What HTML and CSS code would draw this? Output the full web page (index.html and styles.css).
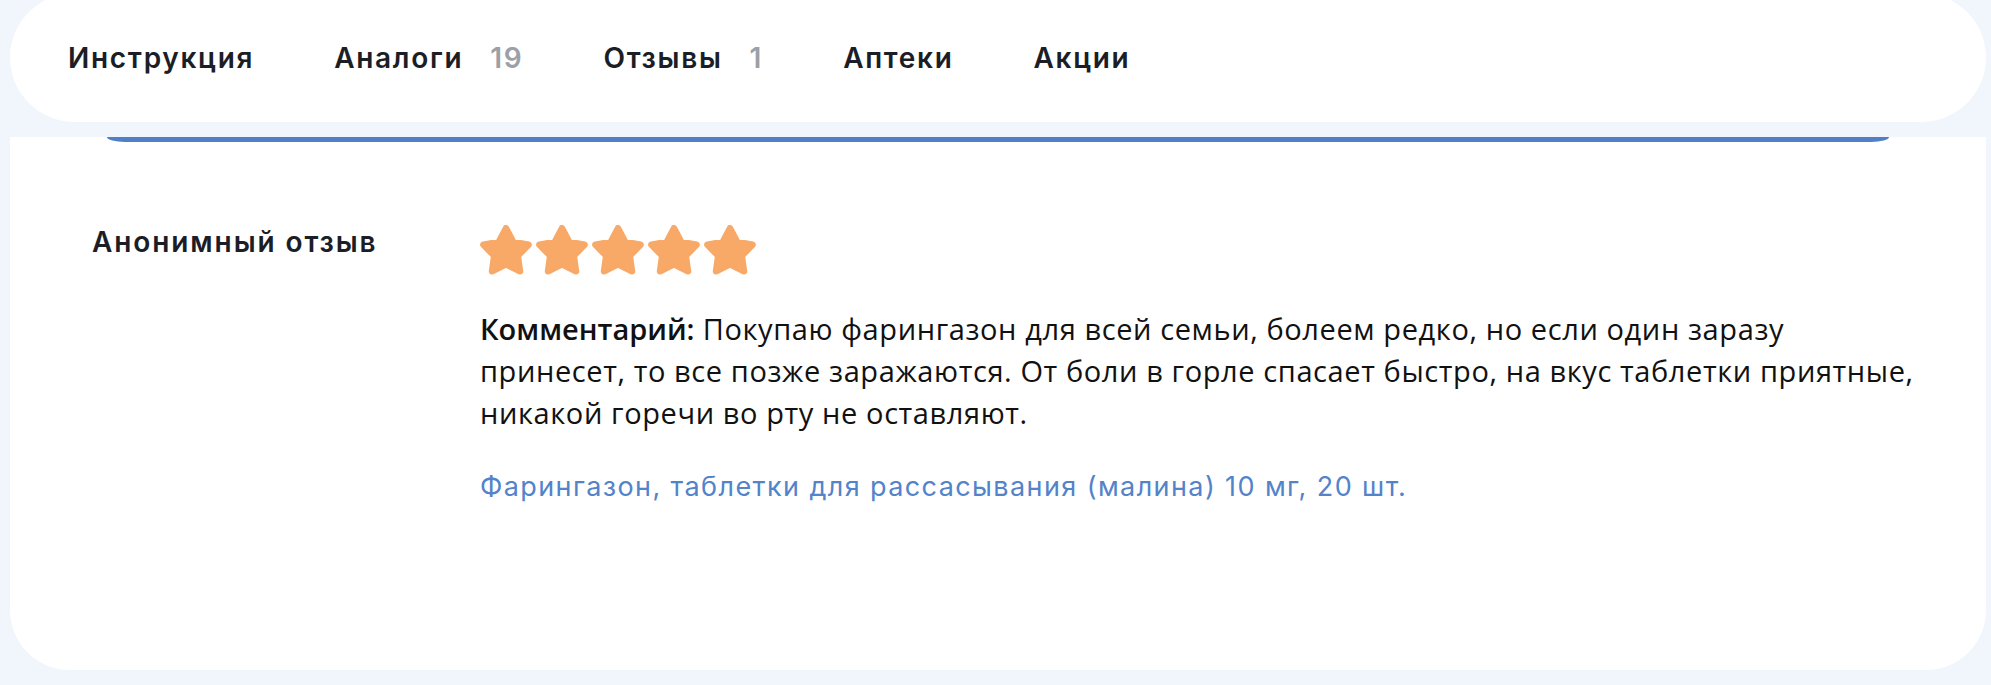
FILE: index.html
```html
<!DOCTYPE html>
<html lang="ru">
<head>
<meta charset="utf-8">
<title>Отзывы</title>
<link rel="stylesheet" href="styles.css">
</head>
<body>
<div class="page">
  <nav class="tabs">
    <a class="tab" href="#">Инструкция</a>
    <a class="tab" href="#">Аналоги<span class="count">19</span></a>
    <a class="tab" href="#">Отзывы<span class="count">1</span></a>
    <a class="tab" href="#">Аптеки</a>
    <a class="tab" href="#">Акции</a>
  </nav>
  <section class="card">
    <div class="card-accent"></div>
    <article class="review">
      <div class="author">Анонимный отзыв</div>
      <div class="review-body">
        <div class="stars">
          <svg class="star" viewBox="0 0 100 100"><polygon points="50,6 63.5,31.4 91.8,36.4 71.9,57.1 75.9,85.6 50,73 24.1,85.6 28.1,57.1 8.2,36.4 36.5,31.4"/></svg>
          <svg class="star" viewBox="0 0 100 100"><polygon points="50,6 63.5,31.4 91.8,36.4 71.9,57.1 75.9,85.6 50,73 24.1,85.6 28.1,57.1 8.2,36.4 36.5,31.4"/></svg>
          <svg class="star" viewBox="0 0 100 100"><polygon points="50,6 63.5,31.4 91.8,36.4 71.9,57.1 75.9,85.6 50,73 24.1,85.6 28.1,57.1 8.2,36.4 36.5,31.4"/></svg>
          <svg class="star" viewBox="0 0 100 100"><polygon points="50,6 63.5,31.4 91.8,36.4 71.9,57.1 75.9,85.6 50,73 24.1,85.6 28.1,57.1 8.2,36.4 36.5,31.4"/></svg>
          <svg class="star" viewBox="0 0 100 100"><polygon points="50,6 63.5,31.4 91.8,36.4 71.9,57.1 75.9,85.6 50,73 24.1,85.6 28.1,57.1 8.2,36.4 36.5,31.4"/></svg>
        </div>
        <p class="comment"><b class="comment-label">Комментарий:</b> Покупаю фарингазон для всей семьи, болеем редко, но если один заразу<br>принесет, то все позже заражаются. От боли в горле спасает быстро, на вкус таблетки приятные,<br>никакой горечи во рту не оставляют.</p>
        <a class="product" href="#">Фарингазон, таблетки для рассасывания (малина) 10 мг, 20 шт.</a>
      </div>
    </article>
  </section>
</div>
</body>
</html>
```

FILE: styles.css
```css
* { box-sizing: border-box; }
html, body { margin: 0; padding: 0; }
body {
  background: #f1f5fc;
  font-family: "Inter", "Open Sans", sans-serif;
  color: #1b1e26;
  overflow: hidden;
}
.page {
  padding: 0 5px 0 10px;
}
.tabs {
  margin-top: -7px;
  height: 129px;
  background: #ffffff;
  border-radius: 65px;
  display: flex;
  align-items: center;
  gap: 80px;
  padding-left: 58px;
}
.tab {
  font-size: 28px;
  line-height: 34px;
  font-weight: 600;
  letter-spacing: 1.7px;
  color: #1b1e26;
  text-decoration: none;
  display: flex;
  align-items: baseline;
}
.count {
  color: #9c9fa5;
  margin-left: 27px;
}
.card {
  margin-top: 15px;
  height: 533px;
  background: #ffffff;
  border-radius: 0 0 60px 60px;
}
.card-accent {
  margin: 0 97px;
  height: 5px;
  background: #4f7fc4;
  border-radius: 0 0 18px 18px / 0 0 5px 5px;
}
.review {
  display: grid;
  grid-template-columns: 388px 1fr;
  padding: 83px 20px 0 82px;
}
.author {
  font-size: 28px;
  line-height: 34px;
  font-weight: 600;
  letter-spacing: 1.9px;
  color: #1b1e26;
}
.stars {
  display: flex;
  gap: 2px;
  margin-left: -1px;
}
.star {
  width: 54px;
  height: 54px;
  fill: #f9a967;
  stroke: #f9a967;
  stroke-width: 12;
  stroke-linejoin: round;
}
.comment {
  margin: 29px 0 0;
  font-family: "Open Sans", sans-serif;
  font-size: 29px;
  line-height: 42px;
  letter-spacing: 0.6px;
  color: #111;
  white-space: nowrap;
}
.comment-label {
  font-weight: 600;
  letter-spacing: 0;
}
.product {
  display: block;
  margin-top: 35px;
  font-size: 27px;
  line-height: 36px;
  letter-spacing: 1.4px;
  color: #5383c9;
  text-decoration: none;
}
```
